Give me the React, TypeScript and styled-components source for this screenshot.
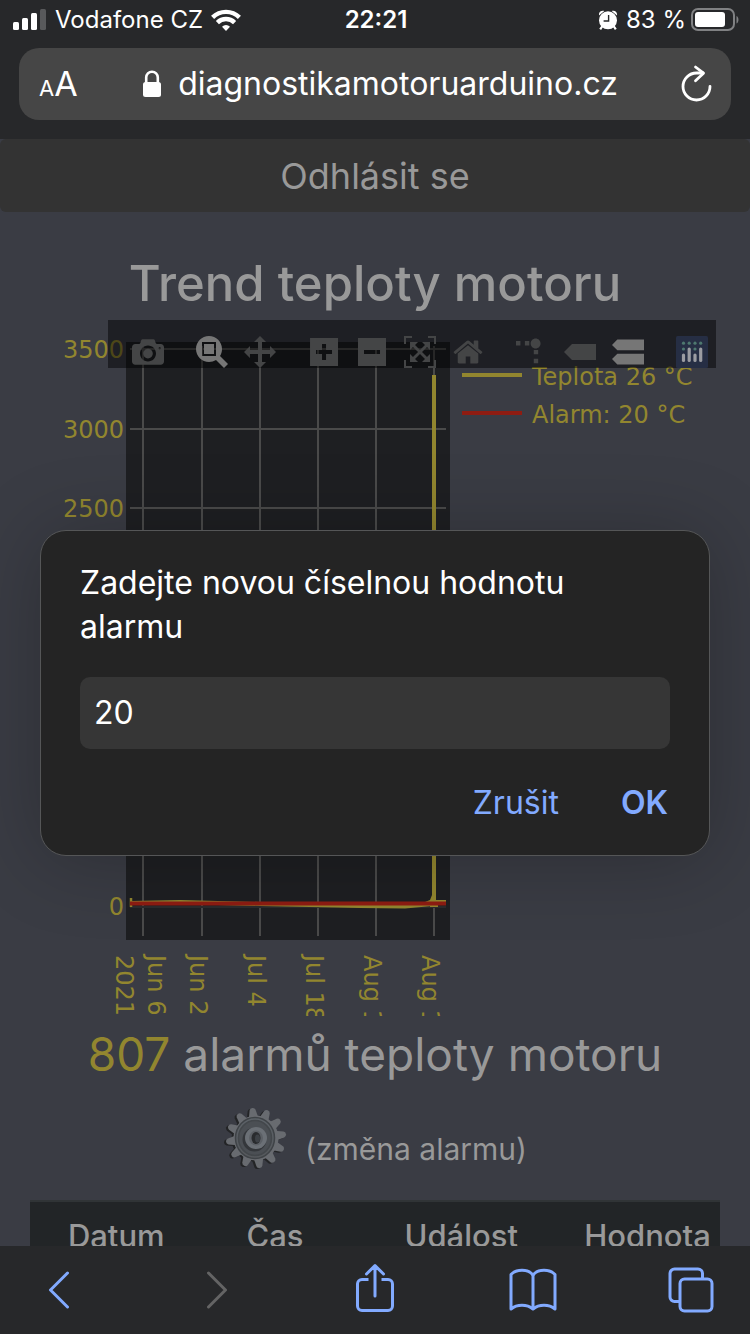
import React from "react";
import styled, { createGlobalStyle } from "styled-components";

const GlobalStyle = createGlobalStyle`
  * { box-sizing: border-box; }
  body {
    margin: 0;
    background: #27282a;
    font-family: Inter, "Liberation Sans", sans-serif;
  }
  button { font: inherit; color: inherit; background: none; border: 0; padding: 0; cursor: pointer; }
  svg { display: block; }
`;

const INK = "#999999";
const GOLD = "#92862f";
const RED = "#8e1c12";
const BLUE = "#82aaff";

/* ---------- browser shell ---------- */

const Shell = styled.div`
  display: flex;
  flex-direction: column;
  height: 100vh;
  overflow: hidden;
`;

const TopChrome = styled.header`
  flex: none;
  padding-bottom: 19px;
  background: #27282a;
  color: #fff;
`;

const StatusBar = styled.div`
  display: grid;
  grid-template-columns: 1fr auto 1fr;
  align-items: center;
  height: 40px;
  margin-bottom: 8px;
  padding: 0 11px 0 13px;
  font-size: 24px;
  line-height: 40px;
`;

const StatusGroup = styled.div<{ $end?: boolean }>`
  display: flex;
  align-items: center;
  justify-content: ${(p) => (p.$end ? "flex-end" : "flex-start")};
  gap: ${(p) => (p.$end ? "5px" : "8px")};
`;

const Clock = styled.time`
  font-weight: 600;
`;

const AddressBar = styled.div`
  display: flex;
  align-items: center;
  justify-content: space-between;
  height: 72px;
  margin: 0 19px;
  padding: 0 18px 0 20px;
  border-radius: 20px;
  background: #464646;
`;

const TextSize = styled.button`
  width: 42px;
  padding-top: 4px;
  font-size: 34px;
  line-height: 40px;
  text-align: left;
  white-space: nowrap;
  small { font-size: 22px; }
`;

const Address = styled.button`
  display: flex;
  align-items: center;
  gap: 16px;
  font-size: 32px;
  line-height: 72px;
`;

const BottomBar = styled.nav`
  flex: none;
  display: flex;
  align-items: center;
  justify-content: space-between;
  height: 88px;
  padding: 0 29px;
  background: #27282a;
`;

const NavButton = styled.button`
  display: flex;
  align-items: center;
  justify-content: center;
  width: 60px;
  height: 60px;
  color: ${BLUE};
  &:disabled { color: #646464; }
`;

/* ---------- page ---------- */

const Viewport = styled.div`
  position: relative;
  flex: 1;
  min-height: 0;
  overflow: hidden;
  background: #3a3c44;
  color: ${INK};
`;

const Page = styled.main`
  display: flex;
  flex-direction: column;
`;

const Logout = styled.button`
  height: 73px;
  border-radius: 6px;
  background: #333333;
  font-size: 36px;
  line-height: 72px;
`;

const Title = styled.h1`
  margin: 42px 0 6px;
  font-size: 49px;
  line-height: 60px;
  font-weight: 500;
  text-align: center;
`;

const ChartBox = styled.section`
  position: relative;
  margin: 0 30px;
`;

const Modebar = styled.div`
  position: absolute;
  top: 0;
  right: 4px;
  display: flex;
  background: rgba(0, 0, 0, 0.47);
`;

const ModeGroup = styled.div`
  display: flex;
  padding-left: 16px;
`;

const ModeButton = styled.button<{ $active?: boolean }>`
  padding: 16px 8px 0;
  color: ${(p) => (p.$active ? "#767676" : "#444546")};
`;

const AlarmCount = styled.h2`
  margin: 8px 0 0;
  font-size: 46px;
  line-height: 60px;
  font-weight: 400;
  text-align: center;
  b { color: ${GOLD}; font-weight: 400; }
`;

const ChangeAlarm = styled.button`
  display: flex;
  align-items: center;
  align-self: center;
  gap: 18px;
  margin: 22px 0 30px;
  font-size: 30px;
  line-height: 40px;
  span { padding-top: 22px; }
`;

const EventTable = styled.table`
  margin: 0 30px;
  border-collapse: collapse;
  table-layout: fixed;
  background: #222527;
  border-top: 2px solid #303436;
  th {
    padding: 12px 0;
    font-size: 31px;
    line-height: 44px;
    font-weight: 500;
    text-align: center;
    white-space: nowrap;
  }
`;

/* ---------- prompt ---------- */

const Overlay = styled.div`
  position: absolute;
  inset: 0;
  display: flex;
  align-items: center;
  justify-content: center;
  padding: 0 40px;
`;

const Prompt = styled.form`
  width: 100%;
  max-width: 670px;
  padding: 30px 39px;
  border: 1px solid #555657;
  border-radius: 26px;
  background: #242424;
  box-shadow: 0 4px 80px rgba(0, 0, 0, 0.24);
  color: #fff;
`;

const PromptLabel = styled.label`
  display: block;
  margin-bottom: 28px;
  font-size: 32px;
  line-height: 44px;
`;

const PromptInput = styled.input`
  display: block;
  width: 100%;
  height: 72px;
  padding: 0 14px;
  border: 0;
  border-radius: 10px;
  outline: 0;
  background: #363636;
  color: #fff;
  font: inherit;
  font-size: 32px;
`;

const PromptActions = styled.div`
  display: flex;
  justify-content: flex-end;
  gap: 62px;
  margin-top: 32px;
  padding-right: 2px;
`;

const PromptButton = styled.button<{ $strong?: boolean }>`
  color: ${BLUE};
  font-size: 32px;
  line-height: 44px;
  font-weight: ${(p) => (p.$strong ? 600 : 400)};
`;

/* ---------- icons ---------- */

const Signal = () => (
  <svg width="34" height="22" viewBox="0 0 34 22" fill="#fff">
    <rect x="0" y="13" width="6" height="8" rx="1.5" />
    <rect x="9" y="9" width="6" height="12" rx="1.5" />
    <rect x="18" y="4" width="6" height="17" rx="1.5" />
    <rect x="27" y="0" width="6" height="21" rx="1.5" fill="#58595b" />
  </svg>
);

const Wifi = () => (
  <svg width="30" height="22" viewBox="0 0 30 22" fill="none" stroke="#fff" strokeWidth="4.4">
    <path d="M1.6 8.4a19 19 0 0 1 26.8 0" />
    <path d="M6.4 13.6a12.2 12.2 0 0 1 17.2 0" />
    <path d="M15 22l-4-4.3a5.8 5.8 0 0 1 8 0z" fill="#fff" stroke="none" />
  </svg>
);

const Alarm = () => (
  <svg width="22" height="20" viewBox="0 0 22 20">
    <circle cx="9" cy="10.3" r="9" fill="#fff" />
    <path d="M0 5.4C-.6 2 2.4-.2 5.4 1zM18 5.4C18.6 2 15.600-.2 12.600 1z" fill="#fff" />
    <path d="M3.400 16L1.200 19.400M14.600 16l2.200 3.400" stroke="#fff" strokeWidth="2.200" />
    <path d="M9.600 5v6H4.600" fill="none" stroke="#27282a" strokeWidth="1.400" />
  </svg>
);

const Battery = () => (
  <svg width="48" height="24" viewBox="0 0 48 24">
    <rect x="1" y="1" width="42" height="21" rx="6" fill="none" stroke="#808183" strokeWidth="2" />
    <rect x="4" y="4" width="30" height="15" rx="3" fill="#fff" />
    <path d="M45.500 8c2.600 1 2.600 6.500 0 7.500z" fill="#808183" />
  </svg>
);

const Lock = () => (
  <svg width="20" height="28" viewBox="0 0 20 28">
    <rect x="1" y="12" width="18" height="15" rx="2.500" fill="#fff" />
    <path d="M4.200 13V7.500a5.800 5.800 0 0 1 11.600 0V13" fill="none" stroke="#fff" strokeWidth="2.600" />
  </svg>
);

const Reload = () => (
  <svg width="34" height="38" viewBox="0 0 34 38" fill="none" stroke="#fff" strokeWidth="2.800" strokeLinecap="round" strokeLinejoin="round">
    <path d="M31 21.500A13.500 13.500 0 1 1 17.500 8H24" />
    <path d="M16.500 2l8 6.200-8 7.600" />
  </svg>
);

const ChevronIcon = ({ forward }: { forward?: boolean }) => (
  <svg width="22" height="38" viewBox="0 0 22 38" fill="none" stroke="currentColor" strokeWidth="3" strokeLinecap="round" strokeLinejoin="round">
    <path d={forward ? "M2.500 2l17 17-17 17" : "M19.500 2l-17 17 17 17"} />
  </svg>
);

const ShareIcon = () => (
  <svg width="40" height="52" viewBox="0 0 40 52" fill="none" stroke="currentColor" strokeWidth="3" strokeLinejoin="round">
    <path d="M13.500 15.500H7A4.500 4.500 0 0 0 2.500 20v22A4.500 4.500 0 0 0 7 46.500h26a4.500 4.500 0 0 0 4.500-4.500V20a4.500 4.500 0 0 0-4.500-4.500h-6.500" />
    <path d="M20 32V2M11.500 10L20 1.600l8.500 8.400" strokeLinecap="round" />
  </svg>
);

const BookIcon = () => (
  <svg width="48" height="44" viewBox="0 0 48 44" fill="none" stroke="currentColor" strokeWidth="3" strokeLinejoin="round">
    <path d="M24 7C19 .8 7.500.8 2 6.500V41c6-5 16-5 22 0 6-5 16-5 22 0V6.500C40.500.8 29 .8 24 7z" />
    <path d="M24 7v34" />
  </svg>
);

const TabsIcon = () => (
  <svg width="46" height="46" viewBox="0 0 46 46" fill="none" stroke="currentColor" strokeWidth="3">
    <path d="M12 34.500H6.500a4.500 4.500 0 0 1-4.500-4.500V6.500A4.500 4.500 0 0 1 6.500 2H30a4.500 4.500 0 0 1 4.500 4.500V12" />
    <rect x="12" y="12" width="32" height="32" rx="4.500" />
  </svg>
);

type ModeIcon = { label: string; width: number; path: string; active?: boolean; transform?: string };

const MODE_GROUPS: ModeIcon[][] = [
  [
    {
      label: "Download plot as a png",
      width: 1000,
      path: "m500 450c-83 0-150-67-150-150 0-83 67-150 150-150 83 0 150 67 150 150 0 83-67 150-150 150z m400 150h-120c-16 0-34 13-39 29l-31 93c-6 15-23 28-40 28h-340c-16 0-34-13-39-28l-31-94c-6-15-23-28-40-28h-120c-55 0-100-45-100-100v-450c0-55 45-100 100-100h800c55 0 100 45 100 100v450c0 55-45 100-100 100z m-400-550c-138 0-250 112-250 250 0 138 112 250 250 250 138 0 250-112 250-250 0-138-112-250-250-250z m365 380c-19 0-35 16-35 35 0 19 16 35 35 35 19 0 35-16 35-35 0-19-16-35-35-35z",
    },
  ],
  [
    {
      label: "Zoom",
      width: 1000,
      active: true,
      path: "m1000-25l-250 251c40 63 63 138 63 218 0 224-182 406-407 406-224 0-406-182-406-406s183-406 407-406c80 0 155 22 218 62l250-250 125 125z m-812 250l0 438 437 0 0-438-437 0z m62 375l313 0 0-312-313 0 0 312z",
    },
    {
      label: "Pan",
      width: 1000,
      path: "m1000 350l-187 188 0-125-250 0 0 250 125 0-188 187-187-187 125 0 0-250-250 0 0 125-188-188 186-187 0 125 252 0 0-250-125 0 187-188 188 188-125 0 0 250 250 0 0-126 187 188z",
    },
  ],
  [
    {
      label: "Zoom in",
      width: 875,
      path: "m1 787l0-875 875 0 0 875-875 0z m687-500l-187 0 0-187-125 0 0 187-188 0 0 125 188 0 0 187 125 0 0-187 187 0 0-125z",
    },
    {
      label: "Zoom out",
      width: 875,
      path: "m0 788l0-876 875 0 0 876-875 0z m688-500l-500 0 0 125 500 0 0-125z",
    },
    {
      label: "Autoscale",
      width: 1000,
      path: "m250 850l-187 0-63 0 0-62 0-188 63 0 0 188 187 0 0 62z m688 0l-188 0 0-62 188 0 0-188 62 0 0 188 0 62-62 0z m-875-938l0 188-63 0 0-188 0-62 63 0 187 0 0 62-187 0z m875 188l0-188-188 0 0-62 188 0 62 0 0 62 0 188-62 0z m-125 188l-1 0-93-94-156 156 156 156 92-93 2 0 0 250-250 0 0-2 93-92-156-156-156 156 94 92 0 2-250 0 0-250 0 0 93 93 157-156-157-156-93 94 0 0 0-250 250 0 0 0-94 93 156 157 156-157-93-93 0 0 250 0 0 250z",
    },
    {
      label: "Reset axes",
      width: 928,
      path: "m786 296v-267q0-15-11-26t-25-10h-214v214h-143v-214h-214q-15 0-25 10t-11 26v267q0 1 0 2t0 2l321 264 321-264q1-1 1-4z m124 39l-34-41q-5-5-12-6h-2q-7 0-12 3l-386 322-386-322q-7-4-13-4-7 2-12 7l-35 41q-4 5-3 13t6 12l401 334q18 15 42 15t43-15l136-114v109q0 8 5 13t13 5h107q8 0 13-5t5-13v-227l122-102q5-5 6-12t-4-13z",
    },
  ],
  [
    {
      label: "Toggle spike lines",
      width: 1000,
      transform: "matrix(1.5 0 0 -1.5 0 850)",
      path: "M512 409c0-57-46-104-103-104-57 0-104 47-104 104 0 57 47 103 104 103 57 0 103-46 103-103z m-327-39l92 0 0 92-92 0z m-185 0l92 0 0 92-92 0z m370-186l92 0 0 93-92 0z m0-184l92 0 0 92-92 0z",
    },
    {
      label: "Show closest data on hover",
      width: 1500,
      path: "m375 725l0 0-375-375 375-374 0-1 1125 0 0 750-1125 0z",
    },
    {
      label: "Compare data on hover",
      width: 1125,
      active: true,
      path: "m187 786l0 2-187-188 188-187 0 0 937 0 0 373-938 0z m0-499l0 1-187-188 188-188 0 0 937 0 0 376-938-1z",
    },
  ],
];

const PlotlyLogo = () => (
  <svg width="32" height="32" viewBox="0 0 32 32">
    <rect width="32" height="32" rx="1.500" fill="#262e44" />
    {[7.5, 13.2, 19, 24.700].map((x, i) => (
      <g key={x}>
        <circle cx={x} cy="7.200" r="1.600" fill="#4e786f" />
        {i % 2 === 0 && <circle cx={x} cy="13" r="1.600" fill="#4e786f" />}
        <rect x={x - 1.6} y={i % 2 === 0 ? 17.500 : 11.500} width="3.200" height={i % 2 === 0 ? 8.500 : 14.500} rx="1.600" fill="#9b9ca2" />
      </g>
    ))}
  </svg>
);

const TEETH = Array.from({ length: 12 }, (_, i) => i * 30 - 7);

const GearIcon = () => {
  const gear = (
    <>
      <circle r="22.5" />
      {TEETH.map((a) => (
        <path key={a} d="M19-5L28-3Q30.200-2.400 30.200 0T28 3L19 5z" transform={`rotate(${a})`} />
      ))}
    </>
  );
  return (
    <svg width="64" height="64" viewBox="-33 -32 64 64">
      <defs>
        <linearGradient id="gearFace" x1="0" y1="0" x2="0" y2="1">
          <stop offset="0" stopColor="#5d6369" />
          <stop offset="1" stopColor="#55585c" />
        </linearGradient>
      </defs>
      <g fill="#232426" transform="translate(-2 1)">{gear}</g>
      <g fill="#686b70">{gear}</g>
      <ellipse rx="19.500" ry="20.500" cx="-1" fill="url(#gearFace)" stroke="#3f4347" strokeWidth="1.500" />
      <ellipse rx="16.500" ry="17.500" cx="-1" fill="#4b4f54" stroke="#43474b" strokeWidth="1.500" />
      <circle r="12" cx="-1.500" cy="1.500" fill="#34373b" />
      <circle r="11" fill="#6b7076" />
      <ellipse rx="7" ry="7.500" fill="#5c6066" />
      <ellipse rx="4.500" ry="6" fill="#292b2e" />
      <ellipse rx="2.500" ry="4" cx="1.500" cy=".5" fill="#3d4146" />
    </svg>
  );
};

/* ---------- chart ---------- */

const Y_GRID = [3500, 3000, 2500, 2000, 1500, 1000, 500];
const Y_LABELS = [3500, 3000, 2500, 0];
const X_TICKS = [
  { x: 113, label: "Jun 6" },
  { x: 172, label: "Jun 20" },
  { x: 230, label: "Jul 4" },
  { x: 288, label: "Jul 18" },
  { x: 346, label: "Aug 1" },
  { x: 404, label: "Aug 15" },
];
const yOf = (value: number) => Math.round(587 - (value * 557) / 3500);

const LEGEND = [
  { y: 55, text: "Teplota 26 °C", color: GOLD },
  { y: 93, text: "Alarm: 20 °C", color: RED },
];

const TrendChart = () => (
  <svg width="100%" viewBox="0 0 690 696" fontFamily='"DejaVu Sans", sans-serif' fontSize="24" fill={GOLD} role="img" aria-label="Trend teploty motoru">
    <rect x="96" y="22" width="324" height="598" fill="#1e1f22" />
    <g stroke="#4a4a4a" strokeWidth="2">
      {X_TICKS.map((t) => (
        <path key={t.label} d={`M${t.x} 26V616`} />
      ))}
      {Y_GRID.map((v) => (
        <path key={v} d={`M100 ${yOf(v) - 1}H416`} />
      ))}
    </g>
    <path d="M100 587H416" stroke="#2c2c2e" strokeWidth="2" />
    <path d="M101 578V587" stroke={GOLD} strokeWidth="2.500" />
    <path d="M101 583L150 582L230 584L330 586L375 586.500L402 584" fill="none" stroke={GOLD} strokeWidth="4" />
    <path d="M402 55V575L400 580L395 582H416V580H406V55z" />
    <path d="M400 584H408V587H400z" />
    <path d="M100 583.500H416" stroke={RED} strokeWidth="4" />
    {Y_LABELS.map((v) => (
      <text key={v} x="94" y={yOf(v) + 8} textAnchor="end">
        {v}
      </text>
    ))}
    {X_TICKS.map((t, i) => (
      <text key={t.label} transform={`translate(${i === 0 ? t.x + 5 : t.x - 12} 635) rotate(90)`}>
        {t.label}
      </text>
    ))}
    <text transform="translate(86 635) rotate(90)">2021</text>
    {LEGEND.map((l) => (
      <g key={l.text}>
        <path d={`M432 ${l.y}h60`} stroke={l.color} strokeWidth="4" />
        <text x="502" y={l.y + 10}>
          {l.text}
        </text>
      </g>
    ))}
  </svg>
);

/* ---------- app ---------- */

export default function App() {
  return (
    <Shell>
      <GlobalStyle />
      <TopChrome>
        <StatusBar>
          <StatusGroup>
            <Signal />
            <span>Vodafone CZ</span>
            <Wifi />
          </StatusGroup>
          <Clock>22:21</Clock>
          <StatusGroup $end>
            <Alarm />
            <span>83 %</span>
            <Battery />
          </StatusGroup>
        </StatusBar>
        <AddressBar>
          <TextSize type="button">
            <small>A</small>A
          </TextSize>
          <Address type="button">
            <Lock />
            diagnostikamotoruarduino.cz
          </Address>
          <button type="button" aria-label="Obnovit">
            <Reload />
          </button>
        </AddressBar>
      </TopChrome>

      <Viewport>
        <Page>
          <Logout type="button">Odhlásit se</Logout>
          <Title>Trend teploty motoru</Title>
          <ChartBox>
            <TrendChart />
            <Modebar>
              {MODE_GROUPS.map((group) => (
                <ModeGroup key={group[0].label}>
                  {group.map((icon) => (
                    <ModeButton key={icon.label} type="button" aria-label={icon.label} $active={icon.active}>
                      <svg width="32" height="32" viewBox={`0 0 ${icon.width} 1000`}>
                        <path d={icon.path} transform={icon.transform ?? "matrix(1 0 0 -1 0 850)"} fill="currentColor" />
                      </svg>
                    </ModeButton>
                  ))}
                </ModeGroup>
              ))}
              <ModeGroup>
                <ModeButton type="button" aria-label="Plotly">
                  <PlotlyLogo />
                </ModeButton>
              </ModeGroup>
            </Modebar>
          </ChartBox>
          <AlarmCount>
            <b>807</b> alarmů teploty motoru
          </AlarmCount>
          <ChangeAlarm type="button">
            <GearIcon />
            <span>(změna alarmu)</span>
          </ChangeAlarm>
          <EventTable>
            <colgroup>
              <col width="25%" />
              <col width="21%" />
              <col width="33%" />
              <col width="21%" />
            </colgroup>
            <thead>
              <tr>
                <th scope="col">Datum</th>
                <th scope="col">Čas</th>
                <th scope="col">Událost</th>
                <th scope="col">Hodnota</th>
              </tr>
            </thead>
          </EventTable>
        </Page>

        <Overlay>
          <Prompt role="dialog" onSubmit={(e) => e.preventDefault()}>
            <PromptLabel htmlFor="alarm-value">Zadejte novou číselnou hodnotu alarmu</PromptLabel>
            <PromptInput id="alarm-value" type="text" inputMode="numeric" defaultValue="20" />
            <PromptActions>
              <PromptButton type="button">Zrušit</PromptButton>
              <PromptButton type="submit" $strong>
                OK
              </PromptButton>
            </PromptActions>
          </Prompt>
        </Overlay>
      </Viewport>

      <BottomBar>
        <NavButton type="button" aria-label="Zpět">
          <ChevronIcon />
        </NavButton>
        <NavButton type="button" aria-label="Vpřed" disabled>
          <ChevronIcon forward />
        </NavButton>
        <NavButton type="button" aria-label="Sdílet">
          <ShareIcon />
        </NavButton>
        <NavButton type="button" aria-label="Záložky">
          <BookIcon />
        </NavButton>
        <NavButton type="button" aria-label="Panely">
          <TabsIcon />
        </NavButton>
      </BottomBar>
    </Shell>
  );
}
